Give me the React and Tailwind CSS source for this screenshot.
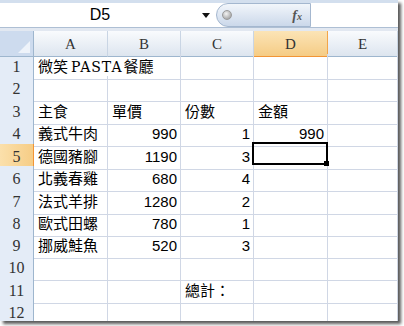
const cols = ["A", "B", "C", "D", "E"];

const rows = [
  { n: 1, h: "h-[22px]" },
  { n: 2, h: "h-[23px]" },
  { n: 3, h: "h-[22px]", a: "主食", b: "單價", c: "份數", d: "金額", text: true },
  { n: 4, h: "h-[23px]", a: "義式牛肉", b: "990", c: "1", d: "990" },
  { n: 5, h: "h-[22px]", a: "德國豬腳", b: "1190", c: "3" },
  { n: 6, h: "h-[23px]", a: "北義春雞", b: "680", c: "4" },
  { n: 7, h: "h-[22px]", a: "法式羊排", b: "1280", c: "2" },
  { n: 8, h: "h-[22px]", a: "歐式田螺", b: "780", c: "1" },
  { n: 9, h: "h-[22px]", a: "挪威鮭魚", b: "520", c: "3" },
  { n: 10, h: "h-[23px]" },
  { n: 11, h: "h-[22px]", c: "總計：", text: true },
  { n: 12, h: "h-[22px]" },
];

const cellFont = "font-['Liberation_Sans','Noto_Sans_CJK_TC',sans-serif] text-[15px] text-black";
const grid = "grid grid-cols-[34px_74px_73px_73px_74px_1fr]";

function Cell({ children, right, noBorder, className }) {
  return (
    <div
      className={`relative flex items-center pt-[1px] border-b border-[#d0d7e5] whitespace-nowrap ${
        noBorder ? "" : "border-r"
      } ${right ? "justify-end pr-[3px]" : "pl-[4px]"} ${cellFont} ${className || ""}`}
    >
      {children}
    </div>
  );
}

function FormulaBar() {
  return (
    <div>
      <div className="h-[3px] bg-[#d3dfee]" />
      <div className="flex h-[24px] bg-white">
        <div className="flex w-[198px] items-center justify-center pl-[2px] font-['Liberation_Sans',sans-serif] text-[16px] text-black">
          D5
        </div>
        <div className="flex w-[18px] items-center">
          <svg width="8" height="5" viewBox="0 0 8 5" className="ml-[4px]">
            <path d="M0 0h8L4 5z" fill="#111" />
          </svg>
        </div>
        <div className="flex w-[95px] items-center rounded-l-full border border-[#a4b7cf] bg-gradient-to-b from-[#f2f6fb] to-[#cbd8ea]">
          <div className="ml-[5px] h-[10px] w-[10px] rounded-full border border-[#9a9a9a] bg-[radial-gradient(circle_at_40%_35%,#f4f4f4,#8e8e8e)]" />
          <span className="ml-auto mr-[8px] font-['Liberation_Serif',serif] text-[14px] font-bold italic text-[#555]">
            f<span className="text-[10px]">x</span>
          </span>
        </div>
        <div className="flex-1 bg-white" />
      </div>
      <div className="h-[4px] border-t border-[#aebfd4] bg-[#e2e8f1]" />
    </div>
  );
}

function HeaderRow() {
  return (
    <div className={`${grid} h-[23px]`}>
      <div className="relative border-r border-b border-[#9eb6ce] bg-[#cddbee]">
        <svg width="12" height="12" viewBox="0 0 12 12" className="absolute bottom-[3px] right-[3px]">
          <path d="M12 0V12H0z" fill="#eef3fa" />
        </svg>
      </div>
      {cols.map((c) => (
        <div
          key={c}
          className={`flex items-center justify-center pt-[2px] border-b font-['Liberation_Serif',serif] text-[15px] text-[#333] ${
            c === "D"
              ? "border-r border-[#f2a54a] border-b-[#f29536] bg-gradient-to-b from-[#fbe4b6] to-[#f5cc85]"
              : "border-r border-r-[#c9d5e4] border-b-[#9eb6ce] bg-gradient-to-b from-[#f9fbfd] to-[#dde5ef]"
          }`}
        >
          {c}
        </div>
      ))}
    </div>
  );
}

export default function App() {
  return (
    <div className="h-[326px] w-[404px] bg-white">
      <div className="flex h-[321px] w-[398px] flex-col overflow-hidden bg-white shadow-[3px_3px_3px_rgba(0,0,0,0.65)]">
        <FormulaBar />
        <HeaderRow />
        {rows.map((r) => (
          <div key={r.n} className={`${grid} ${r.h}`}>
            <div
              className={`flex items-center justify-center pt-[1px] border-r border-b font-['Liberation_Serif',serif] text-[16px] text-[#333] ${
                r.n === 5
                  ? "border-[#f29536] bg-gradient-to-r from-[#fbe0ab] to-[#f6cd86]"
                  : "border-r-[#9eb6ce] border-b-[#d2ddec] bg-[#e4ecf7]"
              }`}
            >
              {r.n}
            </div>
            {r.n === 1 ? (
              <Cell noBorder className="z-10 overflow-visible">
                微笑
                <span className="ml-[3px] mr-[1px] font-['DejaVu_Serif',serif] text-[14px] tracking-[1px]">PASTA</span>
                餐廳
              </Cell>
            ) : (
              <Cell>{r.a}</Cell>
            )}
            <Cell right={!r.text}>{r.b}</Cell>
            <Cell right={!r.text}>{r.c}</Cell>
            <Cell right={!r.text}>
              {r.d}
              {r.n === 5 && (
                <>
                  <div className="absolute left-[-2px] top-[-2px] h-[23px] w-[76px] border-2 border-black" />
                  <div className="absolute left-[70px] top-[17px] h-[5px] w-[5px] bg-black" />
                </>
              )}
            </Cell>
            <Cell />
          </div>
        ))}
      </div>
    </div>
  );
}
